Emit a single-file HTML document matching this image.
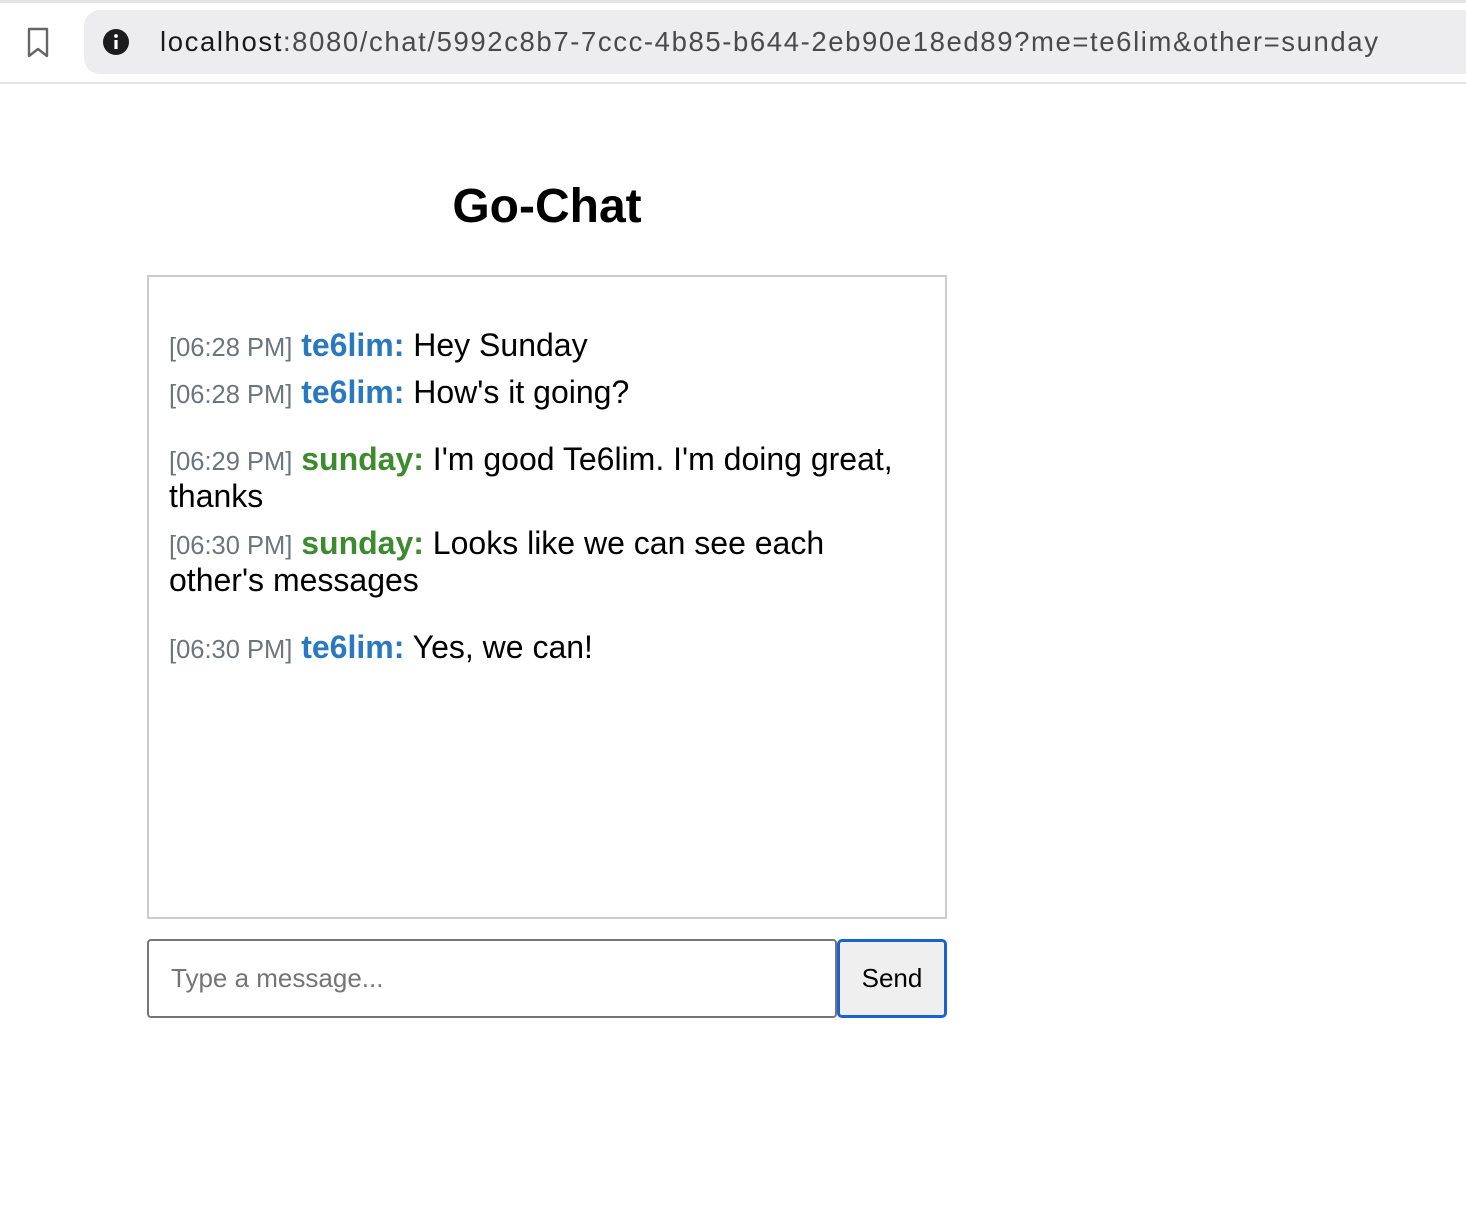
<!DOCTYPE html>
<html><head><meta charset="utf-8"><style>
*{margin:0;padding:0;box-sizing:border-box}
body{width:1466px;height:1226px;background:#fff;font-family:"Liberation Sans",Arial,sans-serif;position:relative;overflow:hidden}
.a{position:absolute;white-space:nowrap}
.ts{color:#6c757d;font-size:25.5px}
.me{color:#2a78c0;font-weight:bold}
.ot{color:#3e8a2e;font-weight:bold}
.m{font-size:32px;color:#000;line-height:36px}
</style></head><body>
<div class="a" style="left:0;top:0;width:1466px;height:3px;background:#e3e3e8"></div>
<div class="a" style="left:0;top:82px;width:1466px;height:2px;background:#e3e3e8"></div>
<svg class="a" style="left:26px;top:27px" width="24" height="32" viewBox="0 0 24 32"><path d="M3 2h18v27l-9-7-9 7z" fill="none" stroke="#666" stroke-width="2.4" stroke-linejoin="round"/></svg>
<div class="a" style="left:84px;top:10px;width:1400px;height:64px;background:#ededf0;border-radius:16px"></div>
<svg class="a" style="left:102px;top:28px" width="28" height="28" viewBox="0 0 28 28"><circle cx="14" cy="14" r="13" fill="#1c1c1e"/><rect x="12.4" y="12" width="3.2" height="9" fill="#fff"/><circle cx="14" cy="8" r="1.9" fill="#fff"/></svg>
<div class="a" style="left:160px;top:25px;font-size:27.5px;color:#4a4a4a;line-height:34px;letter-spacing:1.6px"><span style="color:#1a1a1a">localhost</span>:8080/chat/5992c8b7-7ccc-4b85-b644-2eb90e18ed89?me=te6lim&amp;other=sunday</div>

<div class="a" style="left:0;width:1094px;top:178px;text-align:center;font-size:48px;font-weight:bold;line-height:58px">Go-Chat</div>

<div class="a" style="left:147px;top:275px;width:800px;height:644px;border:2px solid #ccc"></div>
<div class="a m" style="left:169px;top:327px"><span class="ts">[06:28 PM]</span> <span class="me">te6lim:</span> Hey Sunday</div>
<div class="a m" style="left:169px;top:374px"><span class="ts">[06:28 PM]</span> <span class="me">te6lim:</span> How's it going?</div>
<div class="a m" style="left:169px;top:441px"><span class="ts">[06:29 PM]</span> <span class="ot">sunday:</span> I'm good Te6lim. I'm doing great,</div>
<div class="a m" style="left:169px;top:478px">thanks</div>
<div class="a m" style="left:169px;top:525px"><span class="ts">[06:30 PM]</span> <span class="ot">sunday:</span> Looks like we can see each</div>
<div class="a m" style="left:169px;top:562px">other's messages</div>
<div class="a m" style="left:169px;top:629px"><span class="ts">[06:30 PM]</span> <span class="me">te6lim:</span> Yes, we can!</div>

<div class="a" style="left:147px;top:939px;width:690px;height:79px;border:2px solid #767676;border-radius:4px"></div>
<div class="a" style="left:171px;top:962px;font-size:26px;color:#757575;line-height:32px">Type a message...</div>
<div class="a" style="left:837px;top:939px;width:110px;height:79px;border:3px solid #1b62d1;border-radius:5px;background:#efefef"></div>
<div class="a" style="left:837px;top:962px;width:110px;text-align:center;font-size:26px;line-height:32px">Send</div>
</body></html>
